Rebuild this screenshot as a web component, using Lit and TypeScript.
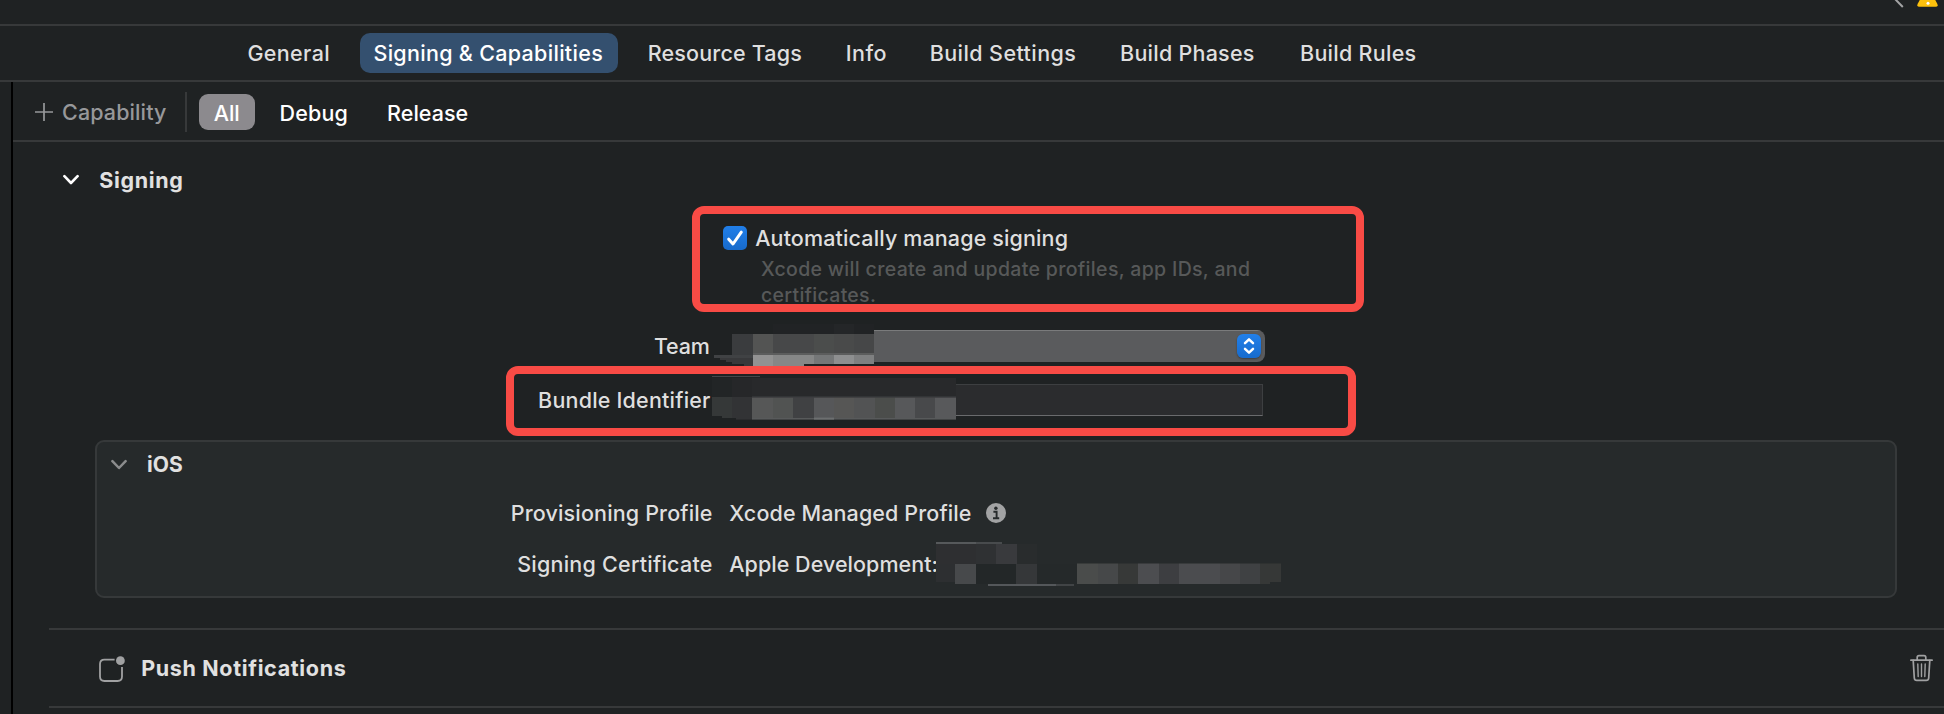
import { LitElement, html, css, svg } from "lit";
import { customElement } from "lit/decorators.js";
import { styleMap } from "lit/directives/style-map.js";

type Cell = [x: number, y: number, w: number, h: number, fill: string];

// Label with its own tracking value.
const label = (text: string, tracking: number) =>
  html`<span style=${styleMap({ letterSpacing: `${tracking}px` })}>${text}</span>`;

const teamCells: Cell[] = [
  [61, 0, 101, 10, "#212325"], [122, 0, 20, 10, "#242628"],
  [20, 10, 21, 21, "#3a3c3e"], [41, 10, 20, 21, "#535453"], [61, 10, 41, 21, "#474849"],
  [102, 10, 20, 21, "#4b4d4c"], [122, 10, 20, 21, "#494a4a"], [142, 10, 20, 21, "#464748"],
  [2, 31, 39, 3, "#404244"], [8, 34, 33, 2, "#38393b"], [14, 36, 27, 2, "#38393b"],
  [20, 38, 21, 2, "#38393b"], [32, 40, 9, 2, "#38393b"],
  [41, 31, 20, 11, "#929292"], [61, 31, 31, 11, "#868787"], [92, 31, 10, 9, "#868787"],
  [102, 31, 20, 9, "#757778"], [122, 31, 20, 9, "#8e8f90"], [142, 31, 20, 9, "#7f8081"],
  [41, 29, 121, 2, "#5c5d5d"],
];

const bundleCells: Cell[] = [
  [0, 0, 48, 1, "#45474a"],
  [0, 2, 20, 19, "#222526"], [20, 2, 20, 19, "#262729"], [40, 2, 204, 19, "#28292b"],
  [0, 21, 10, 19, "#353838"], [10, 21, 10, 21, "#353838"], [20, 21, 20, 21, "#323335"],
  [40, 21, 21, 22, "#565757"], [61, 21, 20, 22, "#515352"], [81, 21, 21, 22, "#404143"],
  [102, 21, 20, 22, "#565759"], [122, 21, 20, 22, "#565655"], [142, 21, 21, 22, "#525354"],
  [163, 21, 20, 22, "#4b4d4b"], [183, 21, 20, 22, "#57585a"], [203, 21, 20, 22, "#48494b"],
  [223, 21, 21, 22, "#58595b"], [24, 42, 16, 1.6, "#323335"], [40, 42, 204, 1.6, "#585a5b"],
  [102, 41.6, 20, 2, "#6d6f70"], [40, 20.4, 204, 1.4, "#3d3e40"],
];

const certificateCells: Cell[] = [
  [0, 0, 40, 2, "#56595b"], [40, 0, 26, 2, "#484b4d"],
  [0, 2, 40, 20, "#2e2f31"], [40, 2, 20, 20, "#2f3133"], [60, 2, 21, 20, "#393a3d"],
  [81, 2, 20, 20, "#292c2d"],
  [0, 22, 19, 18, "#2d2f31"], [19, 22, 21, 20, "#47494b"], [40, 22, 40, 20, "#232728"],
  [80, 22, 21, 20, "#353739"], [101, 22, 40, 20, "#25292a"], [141, 21.5, 21, 20.5, "#4a4c4b"],
  [162, 21.5, 20, 20.5, "#464849"], [182, 21.5, 20, 20.5, "#373938"],
  [202, 21.5, 21, 20.5, "#4c4d50"], [223, 21.5, 20, 20.5, "#3d3e41"],
  [243, 21.5, 41, 20.5, "#4b4c4f"], [284, 21.5, 20, 20.5, "#464749"],
  [304, 21.5, 20, 20.5, "#3f4143"], [324, 21.5, 10, 20.5, "#363837"],
  [334, 21.5, 11, 18.5, "#363837"], [52, 42, 68, 2, "#54575a"], [120, 42, 18, 2, "#414446"],
];

const mosaic = (cls: string, w: number, h: number, cells: Cell[]) => html`
  <svg class="mosaic ${cls}" width=${w} height=${h} viewBox="0 0 ${w} ${h}">
    ${cells.map(([x, y, cw, ch, fill]) =>
      svg`<rect x=${x} y=${y} width=${cw} height=${ch} fill=${fill}></rect>`)}
  </svg>`;

@customElement("app-root")
export class AppRoot extends LitElement {
  static styles = css`
    :host {
      display: block;
      height: 714px;
      overflow: hidden;
      position: relative;
      background: #1f2223;
      color: #dfdfdf;
      font: 500 21.5px/26px Inter, "Liberation Sans", sans-serif;
      font-kerning: normal;
    }
    * { box-sizing: border-box; }
    span { white-space: pre; }
    svg { display: block; flex: none; }
    .top { height: 26px; border-bottom: 2px solid #37393a; display: flex; justify-content: flex-end; padding-right: 4px; }
    .tabs { height: 56px; border-bottom: 2px solid #37393a; display: flex; align-items: center; padding-left: 233.7px; }
    .tab { height: 40px; padding: 7px 13.7px; border-radius: 10px; }
    .tab.general { margin-right: 16px; }
    .tab.on { background: #34506f; color: #fff; margin-right: 30.2px; padding-right: 14.5px; }
    .tab.resource { padding-left: 0; margin-right: 30px; }
    .tab.info { padding: 7px 0; margin-right: 42.8px; }
    .tab.settings { padding: 7px 0; margin-right: 43.8px; }
    .tab.phases { padding: 7px 0; margin-right: 45.4px; }
    .tab.rules { padding: 7px 0; }
    .body { display: flex; height: 632px; }
    .gutter { width: 13px; border-right: 2px solid #000; flex: none; }
    .main { flex: 1; min-width: 0; }
    .bar { height: 60px; border-bottom: 2px solid #37393a; display: flex; align-items: center; padding: 2px 0 0 22px; }
    .add { display: flex; align-items: center; gap: 9px; color: #97989a; width: 150px; }
    .rule { width: 2px; height: 40px; background: #37393a; }
    .pill { width: 56px; height: 36px; margin-left: 12px; border-radius: 9px; background: #8c8a8e; color: #fff; padding: 6px 0 0 14.8px; }
    .filter { color: #fff; padding-top: 2px; margin-left: 24.6px; }
    .filter.release { margin-left: 39px; }
    .bold { font-weight: 700; font-size: 21.5px; color: #e1e1e1; }
    .section { height: 76px; display: flex; align-items: center; padding-left: 50px; }
    .section .bold { margin-left: 20.3px; }
    .auto { height: 38px; padding: 2px 0 0 710px; display: flex; align-items: center; gap: 8.2px; }
    .hint { padding-left: 748px; height: 52px; font-size: 19.5px; color: #575959; display: flex; flex-direction: column; }
    .row { display: flex; height: 32px; margin-top: 22px; align-items: center; }
    .key { width: 697.6px; text-align: right; flex: none; }
    .key.team { padding-right: 1px; }
    .popup { margin-left: 163.4px; width: 391px; height: 32px; background: linear-gradient(#7a7b7c 0 1px, #5a5b5d 1px); border-radius: 0 8px 8px 0; display: flex; justify-content: flex-end; align-items: center; padding-right: 4px; }
    .stepper { width: 24px; height: 24px; border-radius: 6px; background: linear-gradient(#2280ea, #176bcd); box-shadow: 0 1px 2px #0005; }
    .field { margin-left: 245.4px; width: 307px; height: 32px; background: #2b2c2e; border: 1px solid #3d3f41; border-left: 0; border-bottom-color: #6a6b6d; }
    .card { margin: 24px 47px 0 82px; height: 158px; border: 2px solid #36393a; border-radius: 9px; background: #262a2b; }
    .cardhead { height: 46px; padding: 0 0 1px 14px; display: flex; align-items: center; }
    .cardhead svg { margin-top: 1px; }
    .cardhead .bold { margin-left: 20px; font-size: 21px; }
    .line { height: 50px; display: flex; align-items: center; }
    .line.second { height: 52px; }
    .line .key { width: 615.6px; margin-right: 16.7px; }
    .line svg { margin-left: 14px; }
    .cap { height: 80px; margin: 30px 0 0 36px; border: solid #37393a; border-width: 2px 0; display: flex; align-items: center; padding: 0 11px 0 50px; }
    .cap .bold { margin-left: 15.2px; flex: 1; }
    .cap .push { margin-top: 2px; }
    .mark { position: absolute; border: 8px solid #f84b45; border-radius: 12px; }
    .mark.signing { left: 692px; top: 206px; width: 672px; height: 106px; }
    .mark.bundle { left: 506px; top: 366px; width: 850px; height: 70px; }
    .mosaic { position: absolute; }
    .m-team { left: 712px; top: 324px; }
    .m-bundle { left: 712px; top: 376px; }
    .m-cert { left: 936px; top: 542px; }
  `;

  private chevron(color: string, width: number) {
    return html`<svg width="16" height="12" viewBox="0 0 16 12">
      <path d="M1.4 2.2 L8 9 L14.6 2.2" fill="none" stroke=${color} stroke-width=${width}
        stroke-linecap="round" stroke-linejoin="round"></path></svg>`;
  }

  render() {
    return html`
      <div class="top">
        <svg width="48" height="10" viewBox="0 0 48 10">
          <path d="M3 -1 L10.8 7" stroke="#a3a4a5" stroke-width="2"></path>
          <path d="M28.8 -2 L25.6 4 Q24.6 6.8 27.5 6.8 H43.5 Q46.4 6.8 45.4 4 L42.2 -2 Z" fill="#fdc10d"></path>
          <circle cx="36" cy="3.2" r="1.5" fill="#fff"></circle>
        </svg>
      </div>
      <div class="tabs">
        <div class="tab general">${label("General", 0.368)}</div>
        <div class="tab on">${label("Signing & Capabilities", 0.303)}</div>
        <div class="tab resource">${label("Resource Tags", 0.172)}</div>
        <div class="tab info">${label("Info", 0.476)}</div>
        <div class="tab settings">${label("Build Settings", 0.413)}</div>
        <div class="tab phases">${label("Build Phases", 0.249)}</div>
        <div class="tab rules">${label("Build Rules", 0.268)}</div>
      </div>
      <div class="body">
        <div class="gutter"></div>
        <div class="main">
          <div class="bar">
            <div class="add">
              <svg width="18" height="18" viewBox="0 0 18 18">
                <path d="M9 0 V18 M0 9 H18" stroke="#97989a" stroke-width="1.7"></path></svg>
              ${label("Capability", 0.113)}
            </div>
            <div class="rule"></div>
            <div class="pill">${label("All", -0.08)}</div>
            <div class="filter">${label("Debug", 0.158)}</div>
            <div class="filter release">${label("Release", 0.032)}</div>
          </div>

          <div class="section">
            ${this.chevron("#ffffff", 2.6)}
            <div class="bold">${label("Signing", 0.652)}</div>
          </div>
          <div class="auto">
            <svg width="24" height="24" viewBox="0 0 24 24">
              <defs><linearGradient id="check" x2="0" y2="1">
                <stop stop-color="#217fe9"></stop><stop offset="1" stop-color="#176acb"></stop>
              </linearGradient></defs>
              <rect width="24" height="24" rx="5" fill="url(#check)"></rect>
              <path d="M5.7 13.2 L10 18 L18.3 6.2" fill="none" stroke="#fff" stroke-width="3"
                stroke-linecap="round" stroke-linejoin="round"></path>
            </svg>
            ${label("Automatically manage signing", 0.131)}
          </div>
          <div class="hint">
            ${label("Xcode will create and update profiles, app IDs, and", 0.33)}
            ${label("certificates.", 0.29)}
          </div>
          <div class="row">
            <div class="key team">${label("Team", -0.2)}</div>
            <div class="popup"><div class="stepper">
              <svg width="24" height="24" viewBox="0 0 24 24">
                <path d="M8 9.2 L12 5.4 L16 9.2 M8 14.8 L12 18.6 L16 14.8" fill="none"
                  stroke="#fff" stroke-width="2.5" stroke-linecap="round" stroke-linejoin="round"></path>
              </svg></div></div>
          </div>
          <div class="row">
            <div class="key">${label("Bundle Identifier", 0.202)}</div>
            <div class="field"></div>
          </div>

          <div class="card">
            <div class="cardhead">
              ${this.chevron("#8b8c8d", 2.5)}
              <div class="bold">${label("iOS", 0.064)}</div>
            </div>
            <div class="line">
              <div class="key">${label("Provisioning Profile", 0.152)}</div>
              ${label("Xcode Managed Profile", 0.116)}
              <svg width="20" height="20" viewBox="0 0 20 20">
                <circle cx="10" cy="10" r="10" fill="#a2a3a4"></circle>
                <circle cx="9.9" cy="5.3" r="1.7" fill="#262a2b"></circle>
                <path d="M7.4 8.8 H10.6 V15 M7 15.2 H13.2" fill="none" stroke="#262a2b" stroke-width="1.9"></path>
              </svg>
            </div>
            <div class="line second">
              <div class="key">${label("Signing Certificate", 0.23)}</div>
              ${label("Apple Development:", 0.04)}
            </div>
          </div>

          <div class="cap">
            <svg class="push" width="27" height="28" viewBox="0 0 27 28">
              <path d="M15.6 4.6 H5.4 Q1 4.6 1 9 V21.6 Q1 26 5.4 26 H18.6 Q23 26 23 21.6 V12" fill="none"
                stroke="#a0a1a2" stroke-width="1.8"></path>
              <circle cx="21.4" cy="5.7" r="4.4" fill="#a0a1a2"></circle>
            </svg>
            <div class="bold">${label("Push Notifications", 0.66)}</div>
            <svg width="23" height="28" viewBox="0 0 23 28">
              <g fill="none" stroke="#a0a1a2" stroke-width="1.7" stroke-linecap="round" stroke-linejoin="round">
                <path d="M0.9 6.2 H22.1"></path>
                <path d="M7.2 6 V3.4 Q7.2 1.6 9 1.6 H14 Q15.8 1.6 15.8 3.4 V6"></path>
                <path d="M3.2 6.4 L4.3 24 Q4.5 26.4 6.8 26.4 H16.2 Q18.5 26.4 18.7 24 L19.8 6.4"></path>
                <path d="M7.8 10 L8.2 22.6 M11.5 10 V22.6 M15.2 10 L14.8 22.6" stroke-width="1.4"></path>
              </g>
            </svg>
          </div>
        </div>
      </div>
      ${mosaic("m-team", 162, 42, teamCells)}
      ${mosaic("m-bundle", 244, 44, bundleCells)}
      ${mosaic("m-cert", 346, 44, certificateCells)}
      <div class="mark signing"></div>
      <div class="mark bundle"></div>
    `;
  }
}
